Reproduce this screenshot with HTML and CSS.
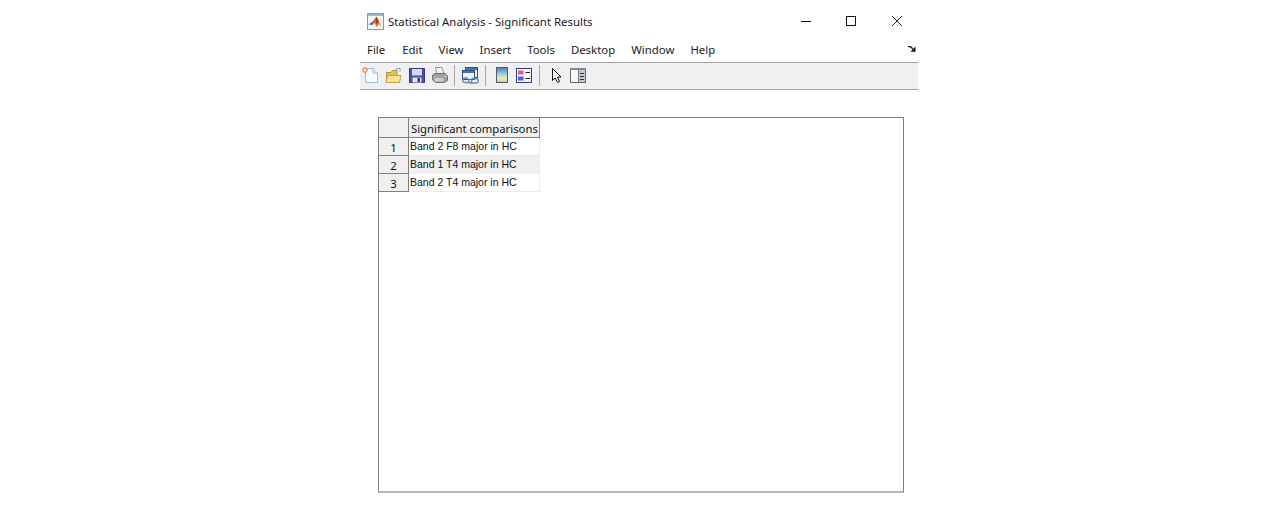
FILE: index.html
```html
<!DOCTYPE html>
<html lang="en">
<head>
    <meta charset="UTF-8">
    <title>Statistical Analysis - Significant Results</title>
    <link rel="stylesheet" href="styles.css">
</head>
<body>

    <div class="window">

        <!-- Title bar -->
        <div class="titlebar">
            <svg class="app-icon" width="17" height="17" viewBox="0 0 17 17">
                <rect x="0.5" y="0.5" width="16" height="16" fill="#f4f5f6" stroke="#8f969e"/>
                <rect x="1" y="1" width="15" height="2" fill="#9db8d4"/>
                <path d="M1.5 11.5 L5.5 8.5 L7.5 9.5 L5.5 12 Z" fill="#2f78c4"/>
                <path d="M5.5 8.5 L9.5 3.5 L14.5 14 L12 11 L9.5 14 L7.5 10 Z" fill="#e8691c"/>
                <path d="M9.5 3.5 L11.5 8 L9.5 11 L8.5 7 Z" fill="#b8321a"/>
            </svg>
            <span class="title">Statistical Analysis - Significant Results</span>
            <div class="window-buttons">
                <svg class="win-btn" width="46" height="12" viewBox="0 0 46 12"><path d="M19 6.5 H29" stroke="#111" fill="none"/></svg>
                <svg class="win-btn" width="46" height="12" viewBox="0 0 46 12"><rect x="18.5" y="1.5" width="9" height="9" stroke="#111" fill="none"/></svg>
                <svg class="win-btn" width="46" height="12" viewBox="0 0 46 12"><path d="M18 1 L28 11 M28 1 L18 11" stroke="#222" fill="none"/></svg>
            </div>
        </div>

        <!-- Menu bar -->
        <div class="menubar">
            <span class="menu-item menu-file">File</span>
            <span class="menu-item">Edit</span>
            <span class="menu-item">View</span>
            <span class="menu-item">Insert</span>
            <span class="menu-item">Tools</span>
            <span class="menu-item">Desktop</span>
            <span class="menu-item">Window</span>
            <span class="menu-item">Help</span>
            <svg class="dock-arrow" width="8" height="6" viewBox="0 0 8 6">
                <path d="M0 0.7 H2.5 L5 3" stroke="#111" fill="none" stroke-width="1.2"/>
                <path d="M7.5 0.5 V5.8 H2.5 Z" fill="#111"/>
            </svg>
        </div>

        <!-- Toolbar -->
        <div class="toolbar">
            <svg class="tool tool-new" width="17" height="17" viewBox="0 0 17 17">
                <path d="M3.5 1.5 H11 L15.5 6 V15.5 H3.5 Z" fill="#f6fbfe" stroke="#9dbdd4"/>
                <path d="M11 1.5 V6 H15.5" fill="#d4e6f2" stroke="#9dbdd4"/>
                <circle cx="3" cy="3" r="2.3" fill="#f8d8b8" stroke="#e8783c"/>
            </svg>
            <svg class="tool tool-open" width="17" height="17" viewBox="0 0 17 17">
                <path d="M1.5 5.5 H6 L7.5 3.5 H12 V15.5 H1.5 Z" fill="#e2c25c" stroke="#b3943c"/>
                <path d="M1 15.5 L2.5 8.5 H16 L14.5 15.5 Z" fill="#f8e396" stroke="#c0a245"/>
                <path d="M10 3.5 Q12 0.5 15 1.5 M15 1 V4.5 M15 1.5 H12.5" stroke="#7f9db6" fill="none"/>
            </svg>
            <svg class="tool tool-save" width="16" height="17" viewBox="0 0 16 17">
                <path d="M0.5 1.5 H15.5 V15.5 H0.5 Z" fill="#4a50aa" stroke="#353a85"/>
                <rect x="3" y="2" width="10" height="6.5" fill="#d5d9f0"/>
                <rect x="3.5" y="10.5" width="9" height="5" fill="#e4e4e8"/>
                <rect x="8.5" y="11" width="2.5" height="4" fill="#353a85"/>
            </svg>
            <svg class="tool tool-print" width="16" height="17" viewBox="0 0 16 17">
                <path d="M3.5 0.5 H10 L12 7 H5 Z" fill="#f2f4f6" stroke="#8f9498"/>
                <path d="M0.5 8 L3 6.5 H13 L15.5 9 V13.5 L12.5 15.5 H4 L0.5 13 Z" fill="#a2a2a2" stroke="#727272"/>
                <path d="M2.5 11 H11.5 V14.5 H2.5 Z" fill="#cdcdcd"/>
                <path d="M12.5 9.5 H14" stroke="#e8e8e8"/>
            </svg>
            <span class="tool-sep"></span>
            <svg class="tool tool-link" width="17" height="17" viewBox="0 0 17 17">
                <rect x="3.5" y="0.5" width="12" height="10" fill="#e6edf5" stroke="#2f4f80"/>
                <rect x="4" y="1" width="11" height="2" fill="#4f74a8"/>
                <rect x="0.5" y="3.5" width="12" height="9" fill="#eef3f8" stroke="#2f4f80"/>
                <rect x="1" y="4" width="11" height="2" fill="#4f74a8"/>
                <path d="M6 11 H3 A2.2 2.2 0 0 0 3 15.5 H8 A2.2 2.2 0 0 0 9 11.5 M8 12 A2.2 2.2 0 0 0 8 16 H14 A2.2 2.2 0 0 0 14 11.5 H10" stroke="#6a88ac" fill="none" stroke-width="1.3"/>
            </svg>
            <span class="tool-sep sep-wide"></span>
            <svg class="tool tool-colorbar" width="12" height="17" viewBox="0 0 12 17">
                <defs>
                    <linearGradient id="colorbar" x1="0" y1="0" x2="0" y2="1">
                        <stop offset="0" stop-color="#5f6fc0"/>
                        <stop offset="0.45" stop-color="#8fdcd4"/>
                        <stop offset="0.75" stop-color="#eeeea4"/>
                        <stop offset="1" stop-color="#f2b488"/>
                    </linearGradient>
                </defs>
                <rect x="0.5" y="0.5" width="11" height="15" fill="url(#colorbar)" stroke="#4a5a78"/>
            </svg>
            <svg class="tool tool-legend" width="16" height="17" viewBox="0 0 16 17">
                <rect x="0.5" y="1.5" width="15" height="14" fill="#f4f6fa" stroke="#2f3f80"/>
                <rect x="2" y="3.5" width="5.5" height="4" fill="#e8606a"/>
                <rect x="2" y="9.5" width="5.5" height="4" fill="#5060d8"/>
                <path d="M9.5 5.5 H14 M9.5 11.5 H14" stroke="#222" stroke-width="1.2"/>
            </svg>
            <span class="tool-sep sep-wide"></span>
            <svg class="tool tool-arrow" width="13" height="17" viewBox="0 0 13 17">
                <path d="M2.5 1.5 V13.5 L5.2 11 L7.6 15.5 L9.6 14.4 L7.4 10.2 L11 10 Z" fill="#f4f4f4" stroke="#111"/>
            </svg>
            <svg class="tool tool-plot" width="16" height="17" viewBox="0 0 16 17">
                <rect x="0.5" y="1.5" width="15" height="14" fill="#f8f8f8" stroke="#666"/>
                <rect x="0" y="1" width="16" height="2" fill="#6f8fa8"/>
                <rect x="9" y="3" width="6" height="12" fill="#c8c8c8"/>
                <path d="M10 6.5 H14 M10 9.5 H14 M10 12.5 H14" stroke="#333"/>
                <path d="M8.5 3 V15" stroke="#777"/>
            </svg>
        </div>

        <!-- Figure area with the results table -->
        <div class="figure">
            <div class="table-panel">
                <table class="results">
                    <thead>
                        <tr>
                            <th class="corner"></th>
                            <th class="col-head">Significant comparisons</th>
                        </tr>
                    </thead>
                    <tbody>
                        <tr>
                            <th class="row-head">1</th>
                            <td>Band 2 F8 major in HC</td>
                        </tr>
                        <tr class="alt">
                            <th class="row-head">2</th>
                            <td>Band 1 T4 major in HC</td>
                        </tr>
                        <tr>
                            <th class="row-head">3</th>
                            <td>Band 2 T4 major in HC</td>
                        </tr>
                    </tbody>
                </table>
            </div>
        </div>
    </div>

</body>
</html>
```

FILE: styles.css
```css
:root {
    --toolbar-bg: #f0f0f0;
    --bar-line: #a0a0a0;
    --head-bg: #f0f0f0;
    --cell-line: #808080;
}

body {
    margin: 0;
    padding: 0;
    background-color: white;
    color: #1a1a1a;
    font-family: "Noto Sans", "Open Sans", Arial, sans-serif;
}

.window {
    width: 558px;
    margin: 0 auto;
}

.titlebar {
    display: flex;
    align-items: center;
    height: 40px;
    padding: 2px 0 0 7px;
    box-sizing: border-box;
}

.app-icon {
    margin-right: 4px;
}

.title {
    font-size: 11.4px;
}

.window-buttons {
    display: flex;
    margin-left: auto;
    margin-right: -2px;
}

.menubar {
    display: flex;
    align-items: center;
    height: 22px;
    padding: 0 0 4px 7px;
    box-sizing: border-box;
    font-size: 11.4px;
}

.menu-item {
    margin-right: 16px;
}

.menu-file {
    margin-right: 17px;
}

.dock-arrow {
    margin-left: auto;
    margin-right: 2px;
}

.toolbar {
    display: flex;
    align-items: center;
    height: 28px;
    box-sizing: border-box;
    padding: 0 0 1px 2px;
    background: var(--toolbar-bg);
    border-top: 1px solid var(--bar-line);
    border-bottom: 1px solid var(--bar-line);
}

.tool {
    flex: none;
    margin-right: 7px;
}

.tool-new,
.tool-print,
.tool-link {
    margin-right: 6px;
}

.tool-colorbar {
    margin-right: 8px;
}

.tool-sep {
    width: 1px;
    height: 21px;
    margin-right: 7px;
    background: #a8a8a8;
}

.sep-wide {
    margin-right: 10px;
}

.figure {
    padding: 27px 14px 0 18px;
}

.table-panel {
    height: 373px;
    border: 1px solid #7f7f7f;
    border-bottom: 2px solid #b2b6b8;
}

.results {
    border-collapse: separate;
    border-spacing: 0;
    font-family: "Liberation Sans", Arial, sans-serif;
    font-size: 10.5px;
    color: #111;
}

.results th {
    font-weight: normal;
    padding: 0;
}

.corner {
    width: 30px;
    height: 20px;
    background: var(--head-bg);
    border-right: 1px solid var(--cell-line);
    border-bottom: 1px solid var(--cell-line);
    box-sizing: border-box;
}

.results .col-head {
    width: 131px;
    min-width: 131px;
    max-width: 131px;
    height: 20px;
    box-sizing: border-box;
    padding: 1px 0 0 2px;
    background: var(--head-bg);
    border-right: 1px solid var(--cell-line);
    border-bottom: 1px solid var(--cell-line);
    text-align: left;
    white-space: nowrap;
    font-family: "Noto Sans", Arial, sans-serif;
    font-size: 11.3px;
}

.results .row-head {
    height: 18px;
    box-sizing: border-box;
    padding-top: 3px;
    background: var(--head-bg);
    border-right: 1px solid var(--cell-line);
    border-bottom: 1px solid var(--cell-line);
    font-family: "Noto Sans", Arial, sans-serif;
    font-size: 11.3px;
    line-height: 14px;
}

.results td {
    height: 18px;
    box-sizing: border-box;
    padding: 0 0 1px 1px;
    border-right: 1px solid #ececec;
    border-bottom: 1px solid #ececec;
    white-space: nowrap;
}

.results .alt td {
    background: #f0f0f0;
}
```
